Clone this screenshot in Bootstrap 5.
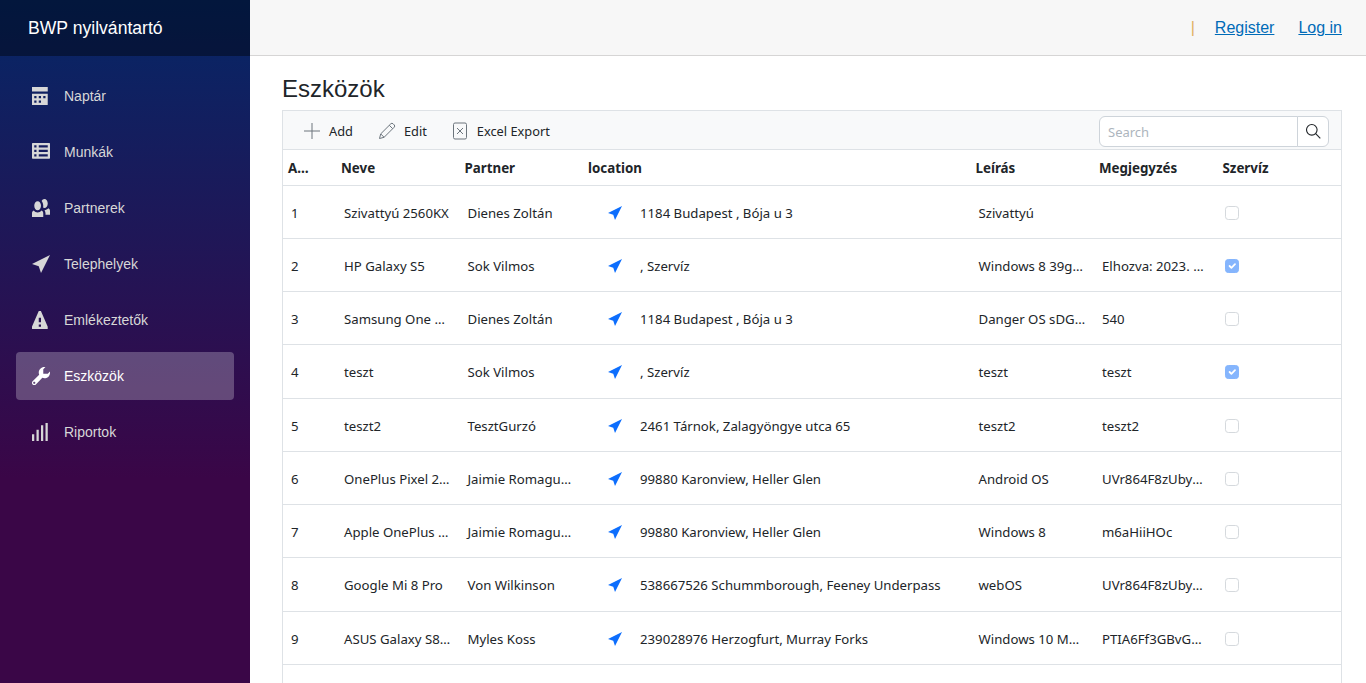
<!DOCTYPE html>
<html lang="en">
<head>
    <meta charset="UTF-8">
    <meta name="viewport" content="width=device-width, initial-scale=1">
    <title>Eszközök</title>
    <link href="https://cdn.jsdelivr.net/npm/bootstrap@5.3.0/dist/css/bootstrap.min.css" rel="stylesheet">
    <script src="https://cdn.jsdelivr.net/npm/bootstrap@5.3.0/dist/js/bootstrap.bundle.min.js"></script>
    <style>
        html, body { height: 100%; overflow: hidden; }
        body { font-family: "Liberation Sans", Arial, sans-serif; color: #212529; }
        .side-panel { width: 250px; height: 683px; background-image: linear-gradient(180deg, #052767 0%, #3a0647 70%); }
        .side-brand { height: 56px; padding-left: 28px; background: rgba(0,0,0,.4); color: #fff; font-size: 17.6px; }
        .side-nav { padding: 16px 16px 0; gap: 8px; }
        .side-link { height: 48px; border-radius: 4px; color: #d7d7d7; font-size: 14px; padding-left: 16px; text-decoration: none; }
        .side-link.active { background: rgba(255,255,255,.25); color: #fff; }
        .side-link svg { width: 18px; height: 18px; margin-right: 14px; fill: currentColor; flex: none; }
        .top-strip { height: 56px; background: #f7f7f7; border-bottom: 1px solid #d6d5d5; padding-right: 24px; }
        .top-strip a { color: #006bb7; margin-left: 24px; font-size: 16px; }
        .top-sep { color: #e0b060; font-size: 16px; margin-right: -4px; }
        .page-body { padding: 18px 24px 0 32px; }
        .page-title { font-size: 24px; font-weight: 400; line-height: 29px; margin: 0 0 7px; height: 29px; }
        .grid-wrap { border: 1px solid #dee2e6; border-bottom: 0; font-family: "Noto Sans", "Open Sans", sans-serif; font-size: 13.2px; height: 600px; overflow: hidden; }
        .grid-tools { height: 39px; background: #f8f9fa; border-bottom: 1px solid #dee2e6; padding: 2px 12px 0 20px; font-size: 12.8px; }
        .tool-btn { display: flex; align-items: center; color: #212529; margin-right: 25px; }
        .tool-btn + .tool-btn { margin-right: 26px; }
        .tool-btn svg { fill: none; stroke: #6c757d; stroke-width: 1; flex: none; }
        .tool-text { padding-top: 2px; }
        .search-box { width: 230px; height: 31px; }
        .search-box .form-control { font-size: 13px; padding: 2px 8px 0; height: 31px; min-height: 31px; border-color: #ced4da; }
        .search-box .form-control::placeholder { color: #adb5bd; }
        .search-box .btn { width: 32px; padding: 0; border-color: #ced4da; background: #fff; display: flex; align-items: center; justify-content: center; }
        .grid-table { table-layout: fixed; width: 100%; margin: 0; color: #212529; }
        .grid-table th, .grid-table td { white-space: nowrap; overflow: hidden; text-overflow: ellipsis; vertical-align: middle; border-bottom: 1px solid #dee2e6; border-top: 0; }
        .grid-table th { height: 35px; padding: 3px 5px 0; font-weight: 700; font-size: 13.33px; }
        .grid-table th.first-head { padding-right: 24px; }
        .grid-table td { height: 53.25px; padding: 4px 7px 0 8px; }
        .w-id { width: 53px; }
        .w-std { width: 123.5px; }
        .w-loc { width: 387.5px; }
        .grid-table td.loc-cell { padding-left: 25px; }
        .loc-pin { width: 14px; height: 14px; fill: #0d6efd; margin-right: 18px; flex: none; position: relative; top: -1px; }
        .grid-table td.check-cell { padding-left: 7px; padding-top: 2px; }
        .grid-table .form-check-input { margin: 0; width: 14px; height: 14px; display: block; opacity: .5; }
        .grid-table .form-check-input:not(:checked) { border-color: #adb5bd; }
    </style>
</head>
<body>
    <div class="d-flex">
        <div class="side-panel flex-shrink-0">
            <div class="side-brand d-flex align-items-center">BWP nyilvántartó</div>
            <nav class="side-nav d-flex flex-column">
                <a class="side-link d-flex align-items-center" href="#">
                    <svg viewBox="0 0 8 8"><path d="M0 0v2h7v-2h-7zm0 3v4.91c0 .05.04.09.09.09h6.81c.05 0 .09-.04.09-.09v-4.91h-7zm1 1h1v1h-1v-1zm2 0h1v1h-1v-1zm2 0h1v1h-1v-1zm-4 2h1v1h-1v-1zm2 0h1v1h-1v-1z"/></svg>
                    Naptár
                </a>
                <a class="side-link d-flex align-items-center" href="#">
                    <svg viewBox="0 0 8 8"><path fill-rule="evenodd" d="M.3 0h7.4c.17 0 .3.13.3.3v6.4c0 .17-.13.3-.3.3h-7.4c-.17 0-.3-.13-.3-.3v-6.4c0-.17.13-.3.3-.3zm.7 1v1h1v-1h-1zm2 0v1h4v-1h-4zm-2 2v1h1v-1h-1zm2 0v1h4v-1h-4zm-2 2v1h1v-1h-1zm2 0v1h4v-1h-4z"/></svg>
                    Munkák
                </a>
                <a class="side-link d-flex align-items-center" href="#">
                    <svg viewBox="0 0 8 8"><path d="M5.5 0c-.51 0-.95.35-1.22.88.45.54.72 1.28.72 2.13 0 .29-.03.55-.09.81.19.11.38.19.59.19.83 0 1.5-.9 1.5-2s-.67-2-1.5-2zm-3 1c-.83 0-1.5.9-1.5 2s.67 2 1.5 2 1.5-.9 1.5-2-.67-2-1.5-2zm4.75 3.16c-.43.51-1.02.82-1.69.84.27.38.44.84.44 1.34v.66h2v-1.66c0-.52-.31-.97-.75-1.19zm-6.5 1c-.44.22-.75.67-.75 1.19v1.66h5v-1.66c0-.52-.31-.97-.75-1.19-.45.53-1.06.84-1.75.84s-1.3-.32-1.75-.84z"/></svg>
                    Partnerek
                </a>
                <a class="side-link d-flex align-items-center" href="#">
                    <svg viewBox="0 0 8 8"><path d="M8 0l-8 4 3 1 1 3 4-8z"/></svg>
                    Telephelyek
                </a>
                <a class="side-link d-flex align-items-center" href="#">
                    <svg viewBox="0 0 8 8"><path d="M3.09 0c-.06 0-.1.04-.13.09l-2.94 6.81c-.02.05-.03.13-.03.19v.81c0 .05.04.09.09.09h6.81c.05 0 .09-.04.09-.09v-.81c0-.05-.01-.14-.03-.19l-2.94-6.81c-.02-.05-.07-.09-.13-.09h-.81zm-.09 3h1v2h-1v-2zm0 3h1v1h-1v-1z"/></svg>
                    Emlékeztetők
                </a>
                <a class="side-link active d-flex align-items-center" href="#">
                    <svg viewBox="0 0 8 8"><path d="M5.5 0c-1.38 0-2.5 1.12-2.5 2.5 0 .32.08.62.19.91l-2.91 2.88c-.39.39-.39 1.05 0 1.44.2.2.46.28.72.28.26 0 .52-.09.72-.28l2.88-2.91c.28.11.58.19.91.19 1.38 0 2.5-1.12 2.5-2.5 0-.16 0-.32-.03-.47l-.97.97h-2v-2l.97-.97c-.15-.03-.31-.03-.47-.03zm-4.5 6.5c.28 0 .5.22.5.5s-.22.5-.5.5-.5-.22-.5-.5.22-.5.5-.5z"/></svg>
                    Eszközök
                </a>
                <a class="side-link d-flex align-items-center" href="#">
                    <svg viewBox="0 0 8 8"><path d="M6 0v8h1v-8h-1zm-2 1v7h1v-7h-1zm-2 2v5h1v-5h-1zm-2 2v3h1v-3h-1z"/></svg>
                    Riportok
                </a>
            </nav>
        </div>

        <div class="flex-grow-1">
            <div class="top-strip d-flex align-items-center justify-content-end">
                <span class="top-sep">|</span>
                <a href="#">Register</a>
                <a href="#">Log in</a>
            </div>
            <div class="page-body">
                <h1 class="page-title">Eszközök</h1>
                <div class="grid-wrap">
                    <div class="grid-tools d-flex align-items-center justify-content-between">
                        <div class="d-flex align-items-center">
                            <div class="tool-btn">
                                <svg width="18" height="18" viewBox="0 0 18 18" class="me-2"><path d="M9 1v16M1 9h16"/></svg>
                                <span class="tool-text">Add</span>
                            </div>
                            <div class="tool-btn">
                                <svg width="18" height="18" viewBox="0 0 18 18" class="me-2"><path d="M1.5 16.5l1.2-4.6L12.8 1.8a1.6 1.6 0 0 1 2.3 0l1.1 1.1a1.6 1.6 0 0 1 0 2.3L6.1 15.3zM2.7 11.9l3.4 3.4M11.3 3.3l3.4 3.4"/></svg>
                                <span class="tool-text">Edit</span>
                            </div>
                            <div class="tool-btn">
                                <svg width="16" height="18" viewBox="0 0 16 18" class="me-2"><rect x=".5" y="1" width="13" height="16" rx="1.5"/><path d="M4 6l6 6M10 6l-6 6"/></svg>
                                <span class="tool-text">Excel Export</span>
                            </div>
                        </div>
                        <div class="input-group search-box">
                            <input type="text" class="form-control" placeholder="Search">
                            <button class="btn" type="button">
                                <svg width="16" height="16" viewBox="0 0 16 16" fill="none" stroke="#212529" stroke-width="1.1"><circle cx="6.8" cy="6.8" r="5.3"/><path d="M10.7 10.7l4.6 4.6"/></svg>
                            </button>
                        </div>
                    </div>
                    <table class="grid-table">
                        <colgroup>
                            <col class="w-id"><col class="w-std"><col class="w-std"><col class="w-loc"><col class="w-std"><col class="w-std"><col class="w-std">
                        </colgroup>
                        <thead>
                            <tr><th class="first-head">Azonosító</th><th>Neve</th><th>Partner</th><th>location</th><th>Leírás</th><th>Megjegyzés</th><th>Szervíz</th></tr>
                        </thead>
                        <tbody id="gridRows"></tbody>
                    </table>
                </div>
            </div>
        </div>
    </div>

    <script>
        const rows = [
            [1, "Szivattyú 2560KX", "Dienes Zoltán", "1184 Budapest , Bója u 3", "Szivattyú", "", false],
            [2, "HP Galaxy S5", "Sok Vilmos", ", Szervíz", "Windows 8 39gHz processor", "Elhozva: 2023. 05. 12.", true],
            [3, "Samsung One Plus 7", "Dienes Zoltán", "1184 Budapest , Bója u 3", "Danger OS sDGa7 build", "540", false],
            [4, "teszt", "Sok Vilmos", ", Szervíz", "teszt", "teszt", true],
            [5, "teszt2", "TesztGurzó", "2461 Tárnok, Zalagyöngye utca 65", "teszt2", "teszt2", false],
            [6, "OnePlus Pixel 2 XL", "Jaimie Romaguera", "99880 Karonview, Heller Glen", "Android OS", "UVr864F8zUbyKd3", false],
            [7, "Apple OnePlus 7 Pro", "Jaimie Romaguera", "99880 Karonview, Heller Glen", "Windows 8", "m6aHiiHOc", false],
            [8, "Google Mi 8 Pro", "Von Wilkinson", "538667526 Schummborough, Feeney Underpass", "webOS", "UVr864F8zUbyKd3", false],
            [9, "ASUS Galaxy S8 Plus", "Myles Koss", "239028976 Herzogfurt, Murray Forks", "Windows 10 Mobile", "PTIA6Ff3GBvGWk21", false],
            ["", "", "", "", "", "", null]
        ];

        let html = "";
        rows.forEach(r => {
            html += `<tr>
                <td>${r[0]}</td>
                <td>${r[1]}</td>
                <td>${r[2]}</td>
                <td class="loc-cell"><div class="d-flex align-items-center"><svg class="loc-pin" viewBox="0 0 8 8"><path d="M8 0l-8 4 3 1 1 3 4-8z"/></svg>${r[3]}</div></td>
                <td>${r[4]}</td>
                <td>${r[5]}</td>
                <td class="check-cell"><input class="form-check-input" type="checkbox" disabled ${r[6] ? "checked" : ""}></td>
            </tr>`;
        });
        document.getElementById("gridRows").innerHTML = html;
    </script>
</body>
</html>
